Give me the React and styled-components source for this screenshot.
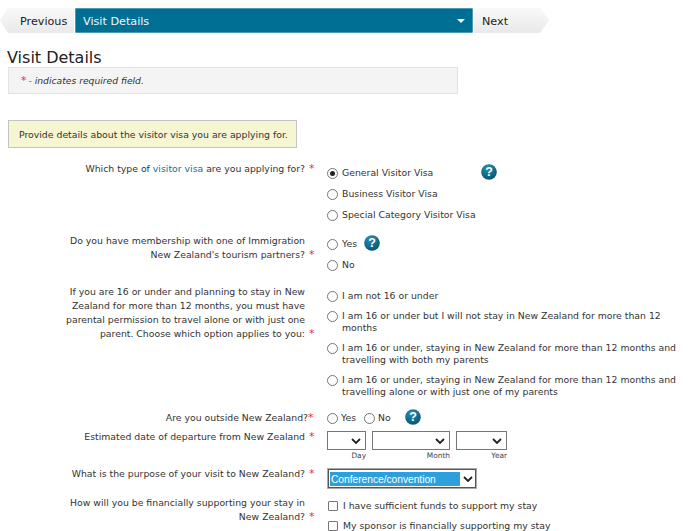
import React from "react";
import styled, { createGlobalStyle } from "styled-components";

const Global = createGlobalStyle`
  html, body { margin: 0; padding: 0; background: #fff; overflow: hidden; }
  body { font-family: "DejaVu Sans", Verdana, sans-serif; font-size: 9.32px; color: #333; }
`;
const Page = styled.div`
  width: 697px; height: 531px; overflow: hidden; padding-top: 8px; box-sizing: border-box;
`;
const Nav = styled.div`
  display: flex; height: 25px; width: 549px; gap: 1px;
`;
const NavSide = styled.div`
  width: ${p => p.$w}px; box-sizing: border-box; height: 25px; display: flex; align-items: center;
  background: linear-gradient(#f9f9f9, #e9e9e9); font-size: 11.2px; color: #222;
  padding: 1px 0 0 ${p => p.$pl}px;
`;
const NavMain = styled.div`
  flex: 1; height: 25px; box-sizing: border-box; background: #006f94; border: 1px solid #4d9ab5; border-radius: 1px;
  color: #f2f7f9; font-size: 11.2px; display: flex; align-items: center; justify-content: space-between;
  padding: 1px 7px 0 7px;
`;
const Caret = styled.span`
  width: 0; height: 0; border-left: 4px solid transparent; border-right: 4px solid transparent; border-top: 4px solid #fff;
`;
const Heading = styled.h1`
  margin: 15px 0 0 7px; font-size: 16px; font-weight: 400; line-height: 19px; color: #222;
`;
const RequiredBox = styled.div`
  margin-left: 8px; width: 450px; height: 27px; box-sizing: border-box; background: #f4f4f4; border: 1px solid #e3e3e3;
  display: flex; align-items: center; padding-left: 12px; font-size: 9.2px; font-style: italic; color: #333;
`;
const Star = styled.span`
  color: #e8303a; font-style: normal; font-size: 11px; line-height: 10px; margin-right: 2px;
`;
const Hang = styled.span`
  display: inline-block; width: 0; overflow: visible; white-space: nowrap; text-align: left;
  color: #e8303a; font-size: 11px; line-height: 10px; margin-left: ${p => p.$ml ?? 4}px; margin-right: ${p => -(p.$ml ?? 4)}px;
`;
const InfoBox = styled.div`
  margin: 26px 0 0 8px; width: 289px; height: 28px; box-sizing: border-box; background: #f6f6d2; border: 1px solid #c4c4c4;
  display: flex; align-items: center; padding-left: 10px; color: #333; white-space: nowrap;
`;
const Row = styled.div`
  display: grid; grid-template-columns: 305px 360px; column-gap: 22px; margin-top: ${p => p.$mt}px;
`;
const Label = styled.div`
  text-align: right; line-height: 14px; color: #333; margin-right: ${p => p.$mr || 0}px;
`;
const Field = styled.div`
  display: flex; flex-direction: column; gap: ${p => p.$gap ?? 7}px; padding-top: ${p => p.$pt || 0}px;
`;
const Inline = styled.div`
  display: flex; align-items: center; gap: ${p => p.$gap ?? 0}px;
`;
const Option = styled.label`
  display: flex; align-items: flex-start; line-height: ${p => p.$lh || 14}px; color: #333; width: ${p => p.$w ? p.$w + "px" : "auto"};
  margin-right: ${p => p.$mr || 0}px; white-space: nowrap;
`;
const Radio = styled.span`
  flex: none; width: 9px; height: 9px; border: 1px solid #767676; border-radius: 50%; background: #fff;
  margin: ${p => p.$mt ?? 2}px ${p => p.$mr ?? 4}px 0 0; display: flex; align-items: center; justify-content: center;
  &::after { content: ""; width: 5px; height: 5px; border-radius: 50%; background: ${p => p.$on ? "#222" : "transparent"}; }
`;
const Check = styled.span`
  flex: none; width: 8px; height: 8px; border: 1px solid #767676; border-radius: 1px; background: #fff; margin: 2px 5px 0 1px;
`;
const Link = styled.span`
  color: #1c6e8c;
`;
const HelpSvg = styled.svg`
  flex: none; display: block; margin-top: -2px;
`;
const Help = () => (
  <HelpSvg viewBox="0 0 16 16" width="16" height="16">
    <defs>
      <radialGradient id="hg" cx="40%" cy="25%" r="85%">
        <stop offset="0" stopColor="#2b8fb2" />
        <stop offset="1" stopColor="#00506e" />
      </radialGradient>
    </defs>
    <circle cx="8" cy="8" r="7.8" fill="url(#hg)" />
    <text x="8" y="12.4" textAnchor="middle" fontFamily="'Liberation Sans', sans-serif" fontWeight="700" fontSize="12.5" fill="#fff">?</text>
  </HelpSvg>
);
const DateRow = styled.div`
  display: flex; gap: 6px; padding-top: 1px;
`;
const DateCol = styled.div`
  display: flex; flex-direction: column; align-items: flex-end;
  font-size: 7.4px; line-height: 10px; color: #444;
`;
const Picker = styled.div`
  width: ${p => p.$w}px; height: 19px; box-sizing: border-box; border: 1px solid #767676; background: #fff;
  display: flex; align-items: center; justify-content: flex-end; padding-right: 4px; margin-bottom: 1px;
`;
const Chevron = () => (
  <svg width="10" height="6" viewBox="0 0 10 6"><path d="M1 1l4 4 4-4" fill="none" stroke="#222" strokeWidth="1.8" /></svg>
);
const Purpose = styled.div`
  width: 148px; height: 19px; margin: 2px 0 0 1px; box-sizing: border-box; border: 1px solid #555; background: #fff; outline: 1px solid #aaa;
  display: flex; padding: 2px 0 1px 1px;
`;
const PurposeText = styled.div`
  flex: 1; background: #2d9fdc; color: #fff; font-family: "Liberation Sans", Arial, sans-serif; font-size: 10.2px; line-height: 15px; padding-left: 1px;
`;
const PurposeArrow = styled.div`
  width: 15px; display: flex; align-items: center; justify-content: center;
`;

export default function App() {
  return (
    <Page>
      <Global />
      <Nav>
        <NavSide $w={74} $pl={20} style={{ clipPath: "polygon(8px 0, 100% 0, 100% 100%, 8px 100%, 0 50%)" }}>Previous</NavSide>
        <NavMain>Visit Details<Caret /></NavMain>
        <NavSide $w={75} $pl={8} style={{ clipPath: "polygon(0 0, 66px 0, 100% 50%, 66px 100%, 0 100%)" }}>Next</NavSide>
      </Nav>
      <Heading>Visit Details</Heading>
      <RequiredBox><Star>*</Star>- indicates required field.</RequiredBox>
      <InfoBox>Provide details about the visitor visa you are applying for.</InfoBox>

      <Row $mt={14}>
        <Label>Which type of <Link>visitor visa</Link> are you applying for?<Hang>*</Hang></Label>
        <Field $pt={4}>
          <Inline>
            <Option $w={154}><Radio $on />General Visitor Visa</Option>
            <Help />
          </Inline>
          <Option><Radio />Business Visitor Visa</Option>
          <Option><Radio />Special Category Visitor Visa</Option>
        </Field>
      </Row>
      <Row $mt={12}>
        <Label>Do you have membership with one of Immigration<br />New Zealand's tourism partners?<Hang>*</Hang></Label>
        <Field $pt={3}>
          <Inline $gap={7}><Option><Radio />Yes</Option><Help /></Inline>
          <Option><Radio />No</Option>
        </Field>
      </Row>
      <Row $mt={13}>
        <Label>If you are 16 or under and planning to stay in New<br />Zealand for more than 12 months, you must have<br />parental permission to travel alone or with just one<br />parent. Choose which option applies to you:<Hang>*</Hang></Label>
        <Field $gap={8} $pt={5}>
          <Option $lh={12}><Radio $mt={1} />I am not 16 or under</Option>
          <Option $lh={12}><Radio $mt={1} /><span>I am 16 or under but I will not stay in New Zealand for more than 12<br />months</span></Option>
          <Option $lh={12}><Radio $mt={1} /><span>I am 16 or under, staying in New Zealand for more than 12 months and<br />travelling with both my parents</span></Option>
          <Option $lh={12}><Radio $mt={1} /><span>I am 16 or under, staying in New Zealand for more than 12 months and<br />travelling alone or with just one of my parents</span></Option>
        </Field>
      </Row>
      <Row $mt={13}>
        <Label $mr={-3}>Are you outside New Zealand?<Hang $ml={0}>*</Hang></Label>
        <Inline>
          <Option $mr={8}><Radio $mr={3} />Yes</Option>
          <Option $mr={14}><Radio $mr={3} />No</Option>
          <Help />
        </Inline>
      </Row>
      <Row $mt={5}>
        <Label>Estimated date of departure from New Zealand<Hang>*</Hang></Label>
        <DateRow>
          <DateCol><Picker $w={39}><Chevron /></Picker>Day</DateCol>
          <DateCol><Picker $w={78}><Chevron /></Picker>Month</DateCol>
          <DateCol><Picker $w={51}><Chevron /></Picker>Year</DateCol>
        </DateRow>
      </Row>
      <Row $mt={6}>
        <Label>What is the purpose of your visit to New Zealand?<Hang>*</Hang></Label>
        <Purpose>
          <PurposeText>Conference/convention</PurposeText>
          <PurposeArrow><Chevron /></PurposeArrow>
        </Purpose>
      </Row>
      <Row $mt={8}>
        <Label>How will you be financially supporting your stay in<br />New Zealand?<Hang>*</Hang></Label>
        <Field $gap={6} $pt={3}>
          <Option><Check />I have sufficient funds to support my stay</Option>
          <Option><Check />My sponsor is financially supporting my stay</Option>
        </Field>
      </Row>
    </Page>
  );
}
